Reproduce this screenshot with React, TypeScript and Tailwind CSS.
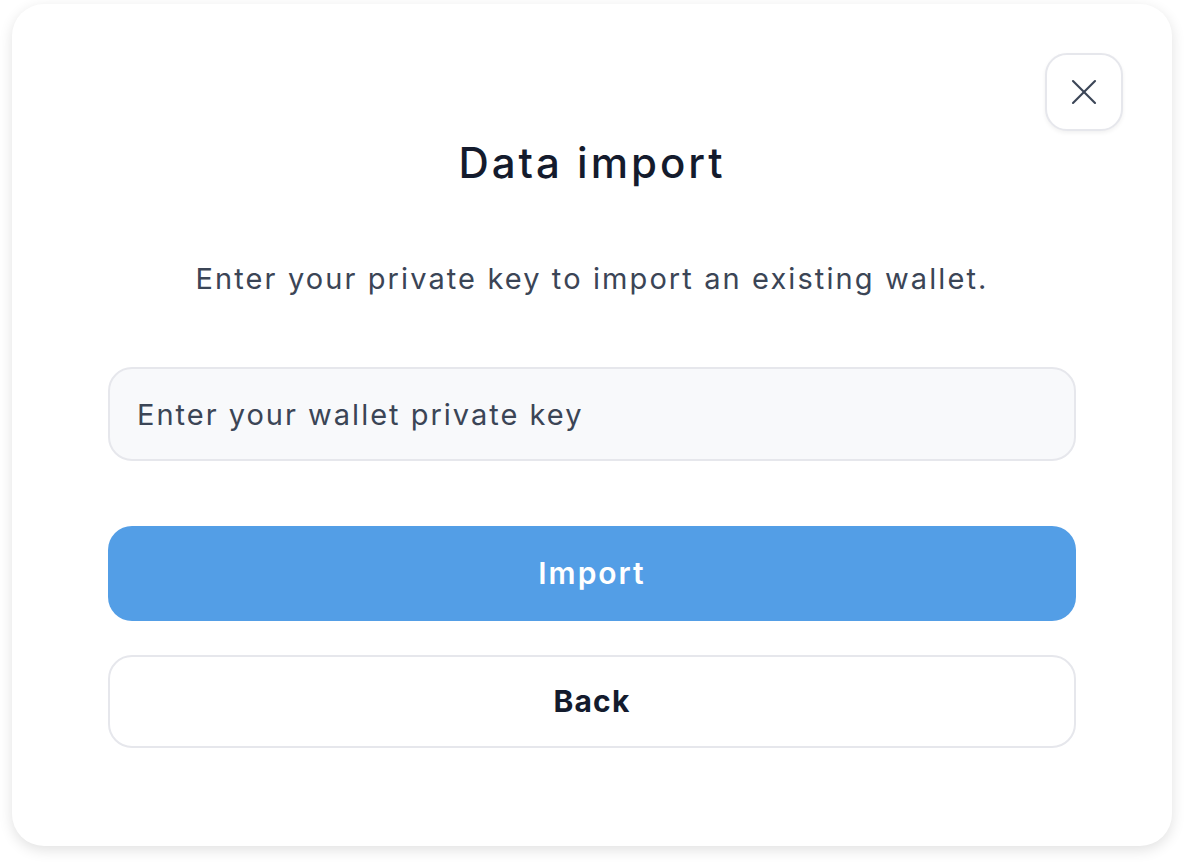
import { X } from "lucide-react";

function App() {
  return (
    <div className="min-h-screen w-full bg-white pt-[4px] px-[12px]" style={{ fontFamily: "Inter, 'Noto Sans', sans-serif" }}>
      <div className="relative flex h-[842px] w-[1160px] flex-col items-center rounded-[32px] bg-white px-24 pt-[133px] shadow-[0_4px_14px_rgba(0,0,0,0.12)]">
        <button className="absolute right-[49px] top-[49px] flex h-[78px] w-[78px] items-center justify-center rounded-[22px] border-2 border-[#e6e7ec] bg-white shadow-[0_2px_4px_rgba(0,0,0,0.06)]">
          <X className="h-[44px] w-[44px] text-[#3b4556]" strokeWidth={1.15} />
        </button>
        <h2 className="text-[42px] font-medium leading-[52px] tracking-[3px] text-[#141b2d]">Data import</h2>
        <p className="mt-[70px] text-[29px] leading-[40px] tracking-[2.1px] text-[#3b4556]">
          Enter your private key to import an existing wallet.
        </p>
        <input
          placeholder="Enter your wallet private key"
          className="mt-[68px] h-[94px] w-full rounded-[24px] border-2 border-[#e6e7ec] bg-[#f8f9fb] px-[27px] text-[29px] tracking-[2px] text-[#3b4556] outline-none placeholder:text-[#3b4556]"
        />
        <button className="mt-[65px] h-[95px] w-full rounded-[24px] bg-[#539ee6] text-[30px] font-semibold tracking-[2px] text-white">
          Import
        </button>
        <button className="mt-[34px] h-[93px] w-full rounded-[24px] border-2 border-[#e6e7ec] bg-white text-[30px] font-bold tracking-[1.2px] text-[#141b2d]">
          Back
        </button>
      </div>
    </div>
  );
}

export default App;
